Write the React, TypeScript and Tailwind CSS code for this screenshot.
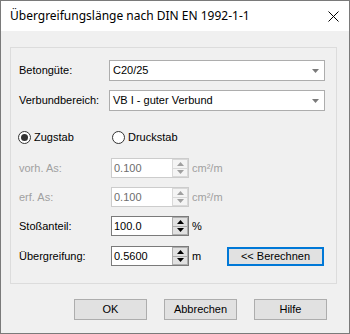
import React from "react";

const F = { fontFamily: '"Liberation Sans", Arial, sans-serif' };

function Combo({ value }: { value: string }) {
  return (
    <div className="w-[216px] h-[21px] bg-white border border-[#adadad] flex items-center pl-[3px] pr-[5px] text-[11px] text-black">
      <span className="flex-1">{value}</span>
      <svg width="7" height="4" viewBox="0 0 7 4"><path d="M0 0H7L3.5 4Z" fill="#7a7a7a" /></svg>
    </div>
  );
}

function Arrow({ up, color }: { up: boolean; color: string }) {
  return (
    <svg width="7" height="4" viewBox="0 0 7 4">
      <path d={up ? "M3.5 0L7 4H0Z" : "M0 0H7L3.5 4Z"} fill={color} />
    </svg>
  );
}

function Spin({ value, disabled }: { value: string; disabled?: boolean }) {
  const border = disabled ? "border-[#cccccc]" : "border-[#7a7a7a]";
  const btnBorder = disabled ? "border-[#d9d9d9]" : "border-[#adadad]";
  const btnBg = disabled ? "bg-[#f4f4f4]" : "bg-[#e1e1e1]";
  const arrow = disabled ? "#a0a0a0" : "#000000";
  return (
    <div className={`w-[78px] h-[20px] bg-white border ${border} flex`}>
      <div className={`flex-1 flex items-center pl-[2px] text-[11px] ${disabled ? "text-[#6d6d6d]" : "text-black"}`}>{value}</div>
      <div className="w-[16px] flex flex-col">
        <div className={`flex-1 flex items-center justify-center border ${btnBorder} ${btnBg}`}><Arrow up color={arrow} /></div>
        <div className={`flex-1 flex items-center justify-center border border-t-0 ${btnBorder} ${btnBg}`}><Arrow up={false} color={arrow} /></div>
      </div>
    </div>
  );
}

function Radio({ checked, label }: { checked?: boolean; label: string }) {
  return (
    <div className="flex items-center">
      <div className="w-[13px] h-[13px] rounded-full border border-[#333333] bg-white flex items-center justify-center">
        {checked && <div className="w-[7px] h-[7px] rounded-full bg-[#333333]" />}
      </div>
      <span className="ml-[3px] text-[11px] text-black">{label}</span>
    </div>
  );
}

function SpinRow({ label, value, unit, disabled, className }: { label: string; value: string; unit: string; disabled?: boolean; className: string }) {
  const c = disabled ? "text-[#a0a0a0]" : "text-black";
  return (
    <div className={`flex items-center h-[20px] ${className}`}>
      <span className={`w-[92px] text-[11px] ${c}`}>{label}</span>
      <Spin value={value} disabled={disabled} />
      <span className={`ml-[3px] text-[11px] ${c}`}>{unit}</span>
    </div>
  );
}

function Btn({ label }: { label: string }) {
  return (
    <div className="w-[73px] h-[21px] bg-[#e1e1e1] border border-[#adadad] flex items-center justify-center text-[11px] text-black">{label}</div>
  );
}

export default function App() {
  return (
    <div style={F} className="w-[350px] h-[334px] border border-[#7a7a7a] bg-[#f0f0f0] flex flex-col overflow-hidden">
      <div className="h-[30px] bg-white flex items-center pl-[9px] pr-[10px]">
        <span className="flex-1 text-[12px] text-black" style={{ fontFamily: '"Noto Sans", "Open Sans", sans-serif' }}>Übergreifungslänge nach DIN EN 1992-1-1</span>
        <svg width="11" height="11" viewBox="0 0 11 11"><path d="M0.5 0.5L10.5 10.5M10.5 0.5L0.5 10.5" stroke="#000" strokeWidth="1" /></svg>
      </div>
      <div className="ml-[9px] mt-[16px] w-[327px] h-[237px] border border-[#dcdcdc] pl-[8px] flex flex-col">
        <div className="mt-[12px] flex items-center h-[21px]">
          <span className="w-[90px] text-[11px] text-black">Betongüte:</span>
          <Combo value="C20/25" />
        </div>
        <div className="mt-[9px] flex items-center h-[21px]">
          <span className="w-[90px] text-[11px] text-black">Verbundbereich:</span>
          <Combo value="VB I - guter Verbund" />
        </div>
        <div className="mt-[20px] flex items-center h-[13px] -ml-px">
          <div className="w-[94px]"><Radio checked label="Zugstab" /></div>
          <Radio label="Druckstab" />
        </div>
        <SpinRow className="mt-[14px]" label="vorh. As:" value="0.100" unit="cm²/m" disabled />
        <SpinRow className="mt-[9px]" label="erf. As:" value="0.100" unit="cm²/m" disabled />
        <SpinRow className="mt-[9px]" label="Stoßanteil:" value="100.0" unit="%" />
        <div className="mt-[10px] flex items-center h-[20px]">
          <span className="w-[92px] text-[11px] text-black">Übergreifung:</span>
          <Spin value="0.5600" />
          <span className="ml-[3px] w-[35px] text-[11px] text-black">m</span>
          <div className="w-[97px] h-[19px] bg-[#e1e1e1] border-2 border-[#0078d7] flex items-center justify-center text-[11px] text-black">&lt;&lt; Berechnen</div>
        </div>
      </div>
      <div className="mt-[15px] ml-[73px] flex gap-[17px]">
        <Btn label="OK" />
        <Btn label="Abbrechen" />
        <Btn label="Hilfe" />
      </div>
    </div>
  );
}
